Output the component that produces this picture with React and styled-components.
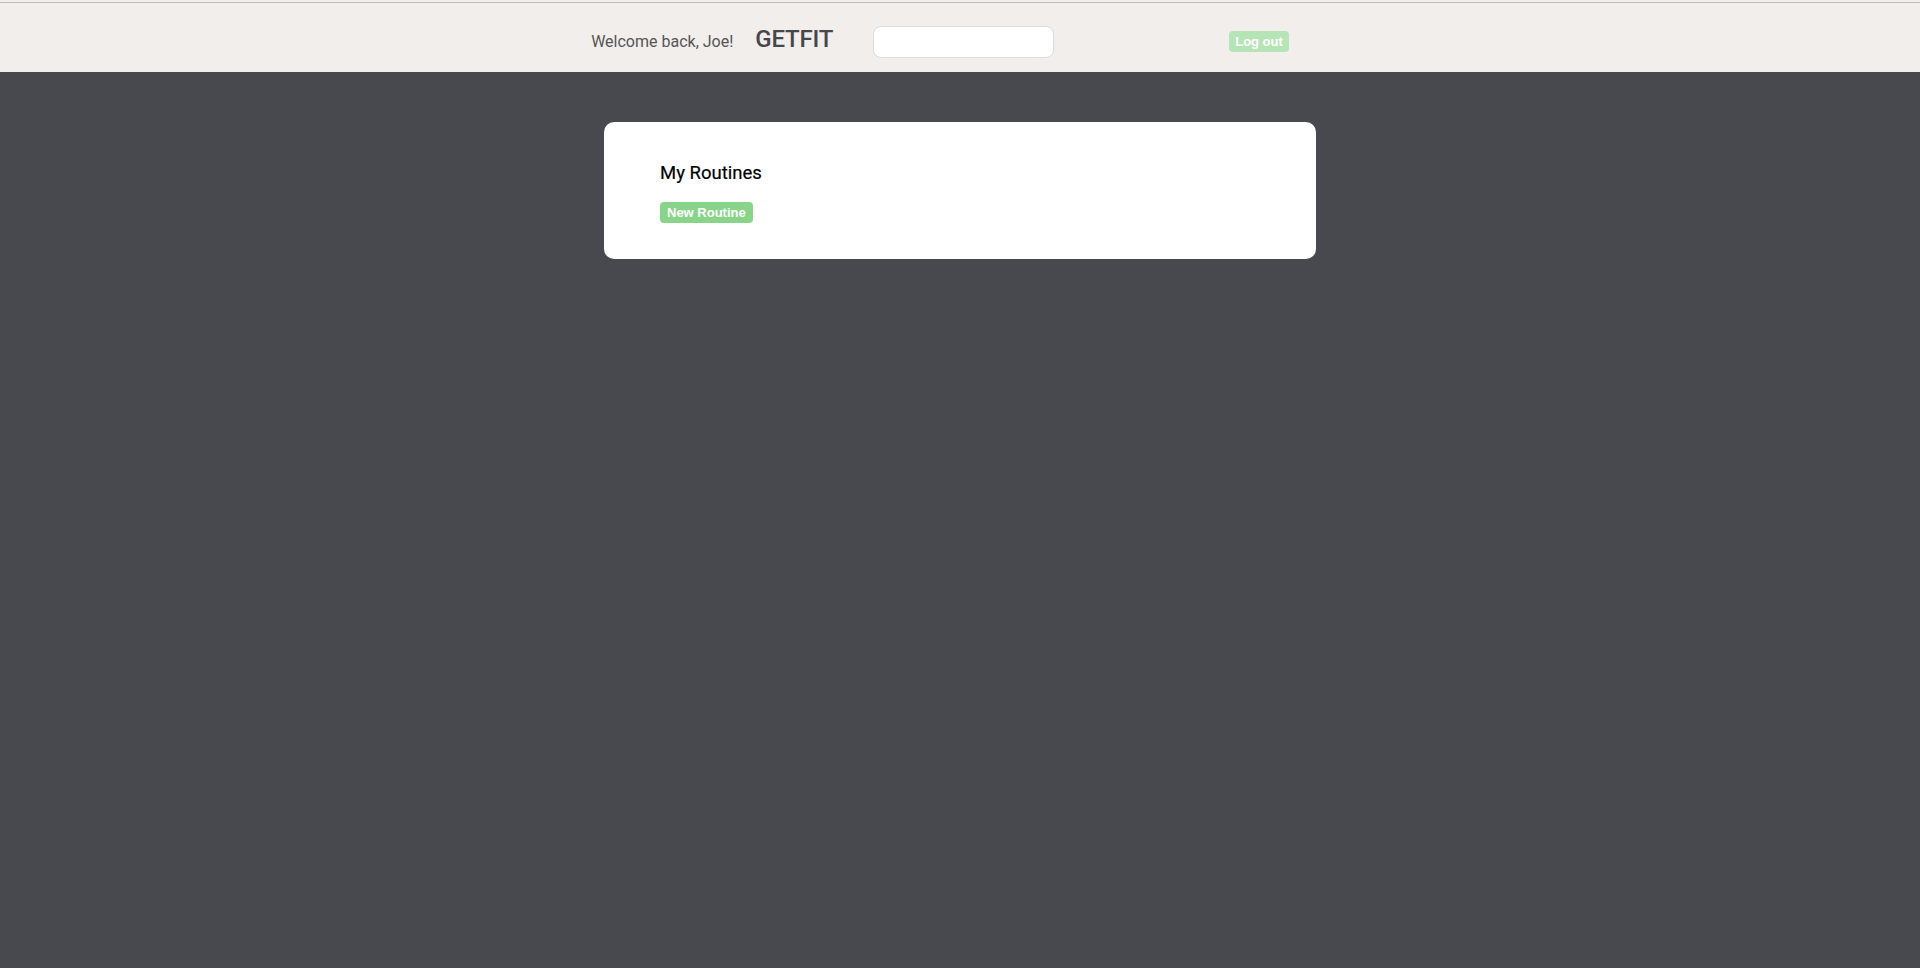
import React from 'react';
import styled, { createGlobalStyle } from 'styled-components';

const GlobalStyle = createGlobalStyle`
  html, body {
    margin: 0;
    padding: 0;
    min-height: 100%;
    background-color: #48494e;
    font-family: 'Roboto', 'Liberation Sans', sans-serif;
  }

  #root {
    min-height: 100vh;
    background-color: #48494e;
  }
`;

const Header = styled.header`
  background-color: #f1eeeb;
  height: 72px;
  display: flex;
  flex-direction: column;
`;

const TopRule = styled.div`
  margin-top: 2px;
  height: 1px;
  background-color: #bdbdbd;
`;

const Nav = styled.nav`
  flex: 1;
  display: flex;
  align-items: center;
  justify-content: center;
  padding: 8px 40px 0 0;
`;

const Welcome = styled.span`
  font-size: 16px;
  color: #555558;
  margin-right: 22px;
`;

const Brand = styled.h1`
  margin: 0 40px 6px 0;
  font-size: 24px;
  font-weight: 500;
  color: #46474c;
  letter-spacing: -0.2px;
`;

const Search = styled.input`
  width: 181px;
  height: 32px;
  box-sizing: border-box;
  border: 1px solid #dcdcdc;
  border-radius: 8px;
  background: #fff;
  margin-right: 175px;
  outline: none;
`;

const Button = styled.button`
  font-family: 'Liberation Sans', Arial, sans-serif;
  font-size: 13px;
  font-weight: bold;
  line-height: 15px;
  color: #fff;
  background-color: ${(p) => (p.$muted ? '#b5e4b5' : '#88d488')};
  border: none;
  border-radius: 4px;
  padding: 3px ${(p) => (p.$muted ? '6px' : '7px')};
  cursor: pointer;
`;

const Main = styled.main`
  display: flex;
  justify-content: center;
  padding-top: 50px;
`;

const Card = styled.section`
  width: 712px;
  box-sizing: border-box;
  background: #fff;
  border-radius: 10px;
  padding: 40px 56px 36px;
  display: flex;
  flex-direction: column;
  align-items: flex-start;
`;

const CardTitle = styled.h3`
  margin: 0 0 18px;
  font-size: 18.5px;
  font-weight: 400;
  color: #000;
  -webkit-text-stroke: 0.2px #000;
`;

export default function App() {
  return (
    <>
      <GlobalStyle />
      <Header>
        <TopRule />
        <Nav>
          <Welcome>Welcome back, Joe!</Welcome>
          <Brand>GETFIT</Brand>
          <Search type="text" />
          <Button $muted>Log out</Button>
        </Nav>
      </Header>
      <Main>
        <Card>
          <CardTitle>My Routines</CardTitle>
          <Button>New Routine</Button>
        </Card>
      </Main>
    </>
  );
}
